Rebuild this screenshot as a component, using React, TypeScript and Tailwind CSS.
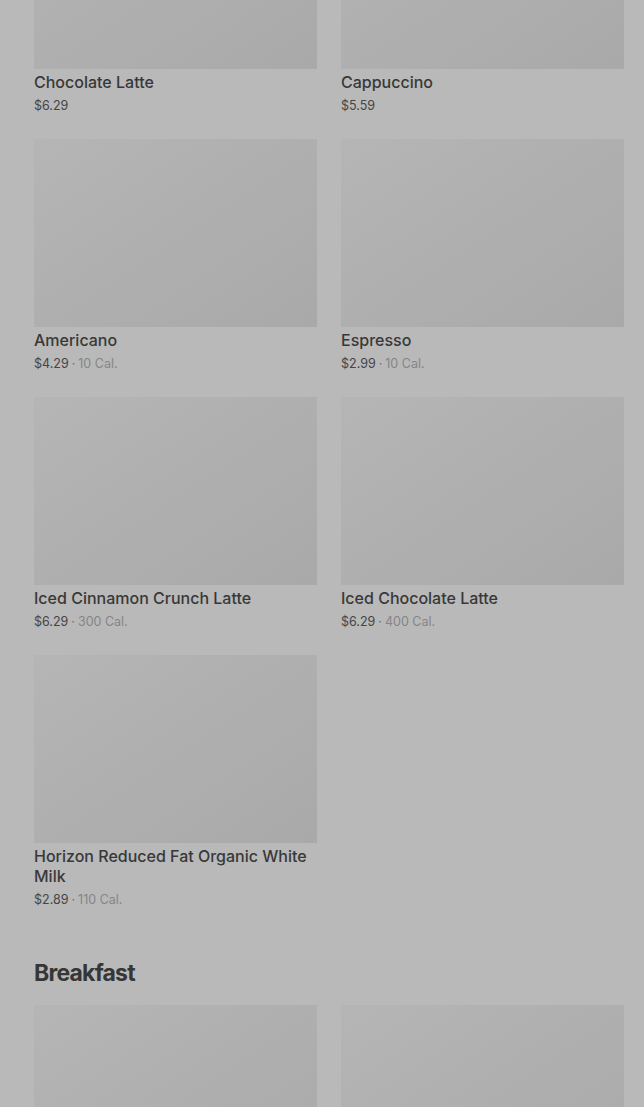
const drinks = [
  { name: "Chocolate Latte", price: "$6.29" },
  { name: "Cappuccino", price: "$5.59" },
  { name: "Americano", price: "$4.29", cal: "10 Cal." },
  { name: "Espresso", price: "$2.99", cal: "10 Cal." },
  { name: "Iced Cinnamon Crunch Latte", price: "$6.29", cal: "300 Cal." },
  { name: "Iced Chocolate Latte", price: "$6.29", cal: "400 Cal." },
  { name: "Horizon Reduced Fat Organic White Milk", price: "$2.89", cal: "110 Cal." },
];

type Item = { name: string; price: string; cal?: string };

function Card({ item }: { item: Item }) {
  return (
    <div className="flex flex-col">
      <div className="h-[188px] w-full bg-gradient-to-br from-[#b5b5b5] to-[#a9a9a9]" />
      <div className="mt-[3px] text-[16px] leading-[20px] font-medium text-[#383838]">
        {item.name}
      </div>
      <div className="mt-[5px] text-[12.5px] leading-[18px] text-[#454545]">
        {item.price}
        {item.cal && (
          <>
            <span className="mx-[3px] text-[#6e6e6e]">·</span>
            <span className="text-[#858585]">{item.cal}</span>
          </>
        )}
      </div>
    </div>
  );
}

export default function App() {
  return (
    <div
      className="h-[1107px] bg-[#b9b9b9] pl-[34px] pr-[20px] overflow-hidden"
      style={{ fontFamily: "Inter, 'Liberation Sans', sans-serif" }}
    >
      <div className="-mt-[119px] grid grid-cols-2 gap-x-[24px] gap-y-[24px]">
        {drinks.map((d) => (
          <Card key={d.name} item={d} />
        ))}
      </div>
      <h2 className="mt-[48px] text-[23px] leading-[32px] font-bold tracking-[-0.8px] text-[#363636]">
        Breakfast
      </h2>
      <div className="mt-[16px] grid grid-cols-2 gap-x-[24px]">
        <div className="h-[188px] bg-gradient-to-br from-[#b5b5b5] to-[#a9a9a9]" />
        <div className="h-[188px] bg-gradient-to-br from-[#b5b5b5] to-[#a9a9a9]" />
      </div>
    </div>
  );
}
